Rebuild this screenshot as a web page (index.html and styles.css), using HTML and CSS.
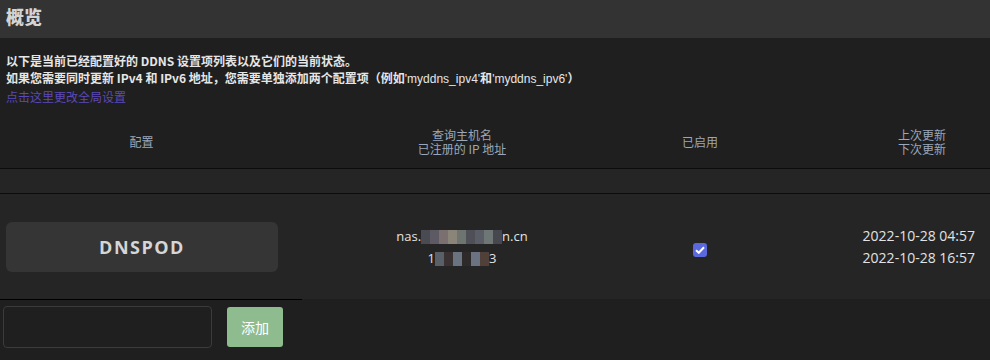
FILE: index.html
```html
<!DOCTYPE html>
<html lang="zh-CN">
<head>
    <meta charset="UTF-8">
    <title>DDNS 概览</title>
    <link rel="stylesheet" href="styles.css">
</head>
<body>
    <div class="title-bar">概览</div>

    <div class="intro">
        <p>以下是当前已经配置好的 DDNS 设置项列表以及它们的当前状态。</p>
        <p>如果您需要同时更新 IPv4 和 IPv6 地址，您需要单独添加两个配置项（例如<span class="latin">'myddns_ipv4'</span>和<span class="latin">'myddns_ipv6'</span>）</p>
        <a href="#">点击这里更改全局设置</a>
    </div>

    <div class="table">
        <div class="row head">
            <div class="cell c1">配置</div>
            <div class="cell c2">查询主机名<br>已注册的 IP 地址</div>
            <div class="cell c3">已启用</div>
            <div class="cell c4">上次更新<br>下次更新</div>
        </div>
        <div class="row spacer"></div>
        <div class="row entry">
            <div class="cell c1"><div class="name-box">DNSPOD</div></div>
            <div class="cell c2">
                <div>nas.<span class="mosaic m-host"><i style="background:#4a4a52"></i><i style="background:#5d5a63"></i><i style="background:#7a7070"></i><i style="background:#8b8579"></i><i style="background:#6e7470"></i><i style="background:#4f4f58"></i><i style="background:#5a5c66"></i><i style="background:#6f7676"></i><i style="background:#474750"></i></span>n.cn</div>
                <div>1<span class="mosaic m-ip"><i style="background:#5a6068"></i><i style="background:#3a3232"></i><i style="background:#6a7380"></i><i style="background:#2e2a2a"></i><i style="background:#6b7383"></i><i style="background:#51403a"></i></span>3</div>
            </div>
            <div class="cell c3"><span class="check"><svg width="10" height="8" viewBox="0 0 10 8"><path d="M1 4.2 L3.8 6.8 L9 1.2" fill="none" stroke="#fff" stroke-width="2"/></svg></span></div>
            <div class="cell c4">
                <div>2022-10-28 04:57</div>
                <div>2022-10-28 16:57</div>
            </div>
        </div>
    </div>

    <div class="add-bar">
        <input type="text" class="add-input">
        <button class="add-btn">添加</button>
    </div>
</body>
</html>
```

FILE: styles.css
```css
body {
    margin: 0;
    background: #1f1f1f;
    font-family: "Noto Sans CJK SC", "Noto Sans", sans-serif;
    color: #dcdcdc;
    width: 990px;
    height: 360px;
    overflow: hidden;
}
.title-bar {
    height: 38px;
    line-height: 32px;
    background: #333333;
    padding-left: 6px;
    font-size: 18px;
    font-weight: 900;
    color: #d4d4d4;
}
.intro {
    padding: 14px 0 0 6px;
    font-size: 12px;
    line-height: 17px;
    height: 61px;
}
.intro p {
    margin: 0;
    color: #e6e6e6;
    font-weight: 600;
}
.intro .latin {
    font-family: "Liberation Sans", sans-serif;
    font-weight: normal;
}
.intro a {
    color: #5b49b8;
    text-decoration: none;
}
.table {
    width: 990px;
}
.row {
    display: grid;
    grid-template-columns: 283px 358px 118px 1fr;
}
.head {
    height: 56px;
    align-items: center;
    font-size: 12px;
    line-height: 14px;
    color: #9aa7bb;
    border-bottom: 1px solid #0c0c0c;
    padding-top: 2px;
    box-sizing: border-box;
}
.head .c4 {
    text-align: right;
    padding-right: 44px;
}
.cell {
    text-align: center;
}
.spacer {
    height: 24px;
    background: #252525;
    border-bottom: 1px solid #0c0c0c;
}
.entry {
    height: 105px;
    background: #252525;
    align-items: center;
    font-family: "Open Sans", "Noto Sans CJK SC", sans-serif;
    font-size: 13px;
    line-height: 22px;
    color: #e2e2e2;
}
.entry .c1 {
    align-self: stretch;
    display: flex;
    align-items: center;
    padding-left: 6px;
    border-bottom: 1px solid #000;
    height: 106px;
    box-sizing: border-box;
    width: 302px;
}
.name-box {
    width: 272px;
    height: 50px;
    line-height: 50px;
    background: #353535;
    border-radius: 6px;
    font-size: 18px;
    font-weight: bold;
    letter-spacing: 1.5px;
    color: #d6d6d6;
}
.entry .c3 {
    display: flex;
    justify-content: center;
    padding-top: 6px;
}
.entry .c4 {
    text-align: right;
    padding-right: 15px;
    font-size: 14px;
}
.mosaic {
    display: inline-flex;
    vertical-align: -3px;
}
.mosaic i {
    display: inline-block;
    width: 9px;
    height: 14px;
}
.check {
    width: 14px;
    height: 14px;
    border-radius: 3px;
    background: #5a69dc;
    display: flex;
    align-items: center;
    justify-content: center;
}
.add-bar {
    display: flex;
    align-items: center;
    gap: 15px;
    padding: 7px 0 0 3px;
}
.add-input {
    width: 209px;
    height: 42px;
    box-sizing: border-box;
    background: #1f1f1f;
    border: 1px solid #3b3b3b;
    border-radius: 4px;
}
.add-btn {
    width: 56px;
    height: 40px;
    background: #8fbc8f;
    border: none;
    border-radius: 3px;
    color: #ffffff;
    font-family: "Noto Sans CJK SC", sans-serif;
    font-size: 14px;
}
```
